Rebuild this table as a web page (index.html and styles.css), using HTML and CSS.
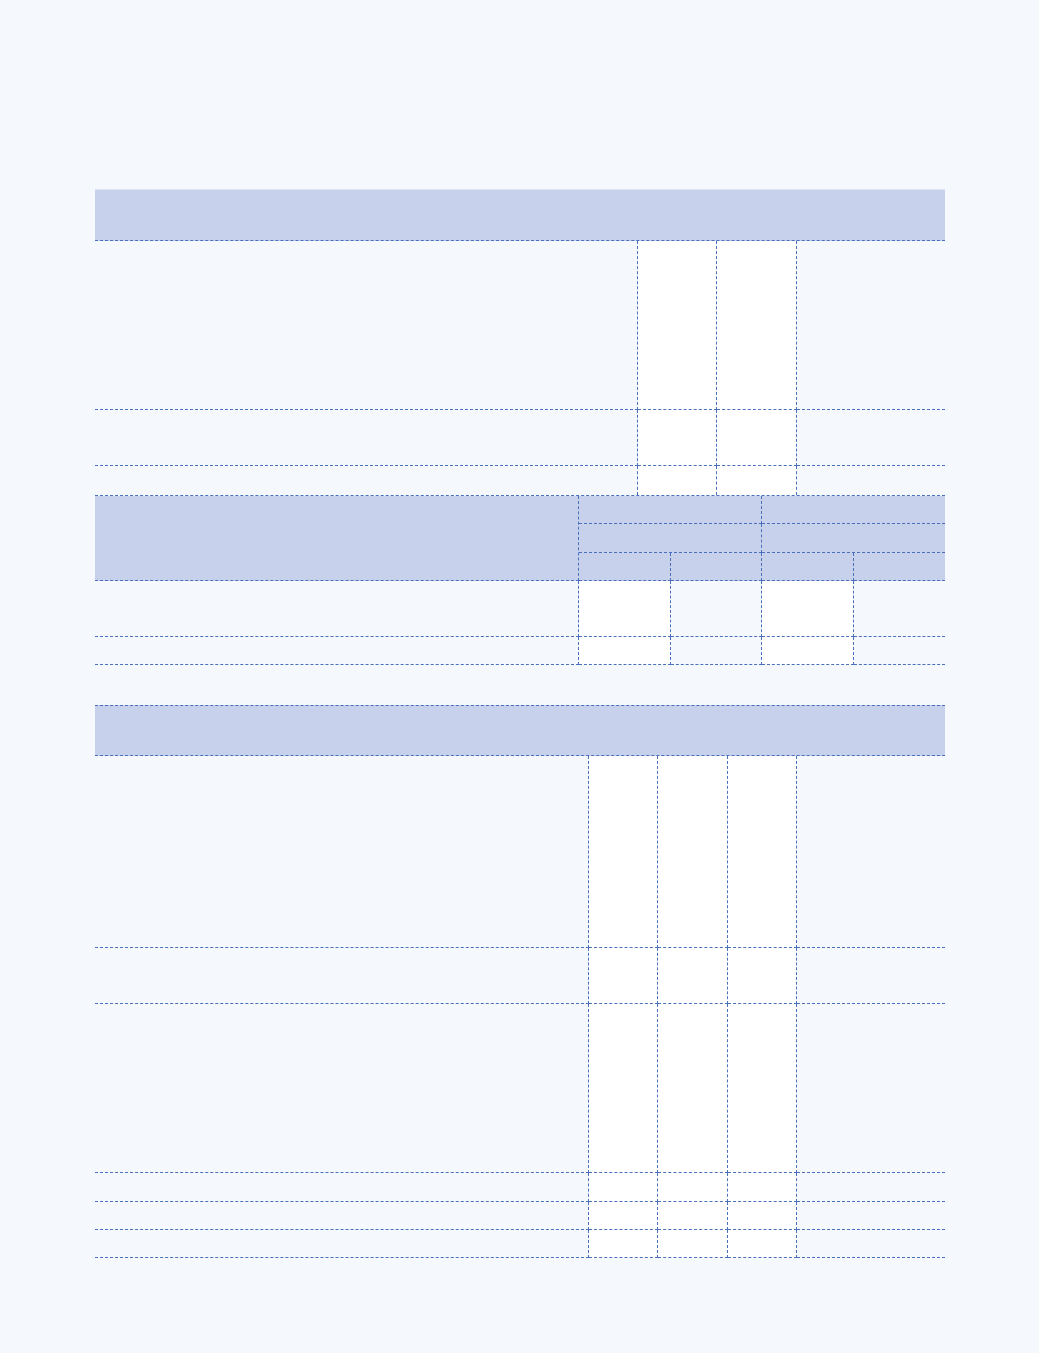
FILE: index.html
```html
<!DOCTYPE html>
<html lang="en">
<head>
<meta charset="utf-8">
<title>Tables</title>
<link rel="stylesheet" href="styles.css">
</head>
<body>
<main class="page">
  <section class="sheet sheet-one">
    <div class="sheet-head"></div>
    <div class="grid grid-one">
      <div class="cell br bb"></div>
      <div class="cell br bb white"></div>
      <div class="cell br bb white"></div>
      <div class="cell bb"></div>

      <div class="cell br bb"></div>
      <div class="cell br bb white"></div>
      <div class="cell br bb white"></div>
      <div class="cell bb"></div>

      <div class="cell br"></div>
      <div class="cell br white"></div>
      <div class="cell br white"></div>
      <div class="cell"></div>
    </div>
  </section>

  <section class="sheet sheet-two">
    <div class="grid grid-two">
      <div class="cell head br bb span-rows"></div>
      <div class="cell head br bb span-2"></div>
      <div class="cell head bb span-2"></div>
      <div class="cell head br bb span-2"></div>
      <div class="cell head bb span-2"></div>
      <div class="cell head br bb"></div>
      <div class="cell head br bb"></div>
      <div class="cell head br bb"></div>
      <div class="cell head bb"></div>

      <div class="cell br bb"></div>
      <div class="cell br bb white"></div>
      <div class="cell br bb"></div>
      <div class="cell br bb white"></div>
      <div class="cell bb"></div>

      <div class="cell br bb"></div>
      <div class="cell br bb white"></div>
      <div class="cell br bb"></div>
      <div class="cell br bb white"></div>
      <div class="cell bb"></div>
    </div>
  </section>

  <section class="sheet sheet-three">
    <div class="sheet-head"></div>
    <div class="grid grid-three">
      <div class="cell br bb"></div>
      <div class="cell br bb white"></div>
      <div class="cell br bb white"></div>
      <div class="cell br bb white"></div>
      <div class="cell bb"></div>

      <div class="cell br bb"></div>
      <div class="cell br bb white"></div>
      <div class="cell br bb white"></div>
      <div class="cell br bb white"></div>
      <div class="cell bb"></div>

      <div class="cell br bb"></div>
      <div class="cell br bb white"></div>
      <div class="cell br bb white"></div>
      <div class="cell br bb white"></div>
      <div class="cell bb"></div>

      <div class="cell br bb"></div>
      <div class="cell br bb white"></div>
      <div class="cell br bb white"></div>
      <div class="cell br bb white"></div>
      <div class="cell bb"></div>

      <div class="cell br bb"></div>
      <div class="cell br bb white"></div>
      <div class="cell br bb white"></div>
      <div class="cell br bb white"></div>
      <div class="cell bb"></div>

      <div class="cell br bb"></div>
      <div class="cell br bb white"></div>
      <div class="cell br bb white"></div>
      <div class="cell br bb white"></div>
      <div class="cell bb"></div>
    </div>
  </section>
</main>
</body>
</html>
```

FILE: styles.css
```css
html, body {
  margin: 0;
  padding: 0;
  background: #f5f9fe;
  font-family: "Liberation Sans", Arial, sans-serif;
}

.page {
  width: 850px;
  margin-left: 95px;
  padding-top: 189px;
  padding-bottom: 95px;
}

.sheet {
  display: flex;
  flex-direction: column;
}

.sheet-three {
  margin-top: 40px;
}

.sheet-head {
  box-sizing: border-box;
  background: #c7d1eb;
  border-bottom: 1px dashed #4a70bc;
}

.sheet-one .sheet-head {
  height: 52px;
  border-top: 1px solid #dfe5f4;
}

.sheet-three .sheet-head {
  height: 51px;
  border-top: 1px dashed #4a70bc;
}

.grid {
  display: grid;
}

.grid-one {
  grid-template-columns: 543px 79px 80px 148px;
  grid-template-rows: 169px 56px 29px;
}

.grid-two {
  border-top: 1px dashed #4a70bc;
  grid-template-columns: 484px 92px 91px 92px 91px;
  grid-template-rows: 28px 29px 28px 56px 28px;
}

.grid-three {
  grid-template-columns: 494px 69px 70px 69px 148px;
  grid-template-rows: 192px 56px 169px 29px 28px 28px;
}

.cell {
  box-sizing: border-box;
  min-width: 0;
}

.br {
  border-right: 1px dashed #4a70bc;
}

.bb {
  border-bottom: 1px dashed #4a70bc;
}

.white {
  background: #ffffff;
}

.head {
  background: #c7d1eb;
}

.span-rows {
  grid-row: span 3;
}

.span-2 {
  grid-column: span 2;
}
```
